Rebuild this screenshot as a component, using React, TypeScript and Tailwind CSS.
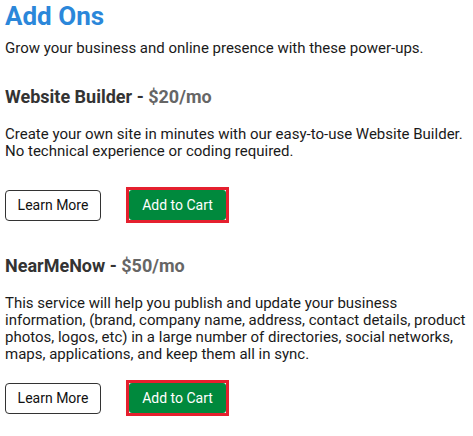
import type { ReactNode } from "react";

interface AddOn {
  name: string;
  price: string;
  description: ReactNode;
  gapAfterText: string;
}

const ADD_ONS: AddOn[] = [
  {
    name: "Website Builder",
    price: "$20/mo",
    description: (
      <>
        Create your own site in minutes with our easy-to-use Website Builder.
        <br />
        No technical experience or coding required.
      </>
    ),
    gapAfterText: "mt-[27px]",
  },
  {
    name: "NearMeNow",
    price: "$50/mo",
    description:
      "This service will help you publish and update your business information, (brand, company name, address, contact details, product photos, logos, etc) in a large number of directories, social networks, maps, applications, and keep them all in sync.",
    gapAfterText: "mt-[17px]",
  },
];

function AddOnCard({ addOn, first }: { addOn: AddOn; first: boolean }) {
  return (
    <section className={first ? "mt-[29px]" : "mt-[32px]"}>
      <h2 className="text-[18px] leading-[22px] font-bold text-[#333333]">
        {addOn.name} - <span className="text-[#666666]">{addOn.price}</span>
      </h2>
      <p className="mt-[18px] text-[15px] leading-[17px] text-[#1a1a1a]">
        {addOn.description}
      </p>

      {/* buttons */}
      <div className={`flex items-center gap-[25px] ${addOn.gapAfterText}`}>
        <button className="w-[96px] h-[31px] rounded-[4px] border border-[#333333] bg-white text-[14px] text-[#111111]">
          Learn More
        </button>
        <div className="border-[3px] border-[#e5202e] bg-white">
          <button className="flex w-[97px] h-[30px] items-center justify-center rounded-[3px] bg-[#00893d] text-[14px] text-white">
            Add to Cart
          </button>
        </div>
      </div>
    </section>
  );
}

export default function App() {
  return (
    <div className="w-[473px] h-[436px] bg-white px-[5px] font-['Roboto',sans-serif]">
      <h1 className="pt-[1px] text-[26px] leading-[30px] font-bold text-[#2b87da]">
        Add Ons
      </h1>
      <p className="mt-[9px] text-[15px] leading-[17px] text-[#1a1a1a]">
        Grow your business and online presence with these power-ups.
      </p>

      {ADD_ONS.map((a, i) => (
        <AddOnCard key={a.name} addOn={a} first={i === 0} />
      ))}
    </div>
  );
}
